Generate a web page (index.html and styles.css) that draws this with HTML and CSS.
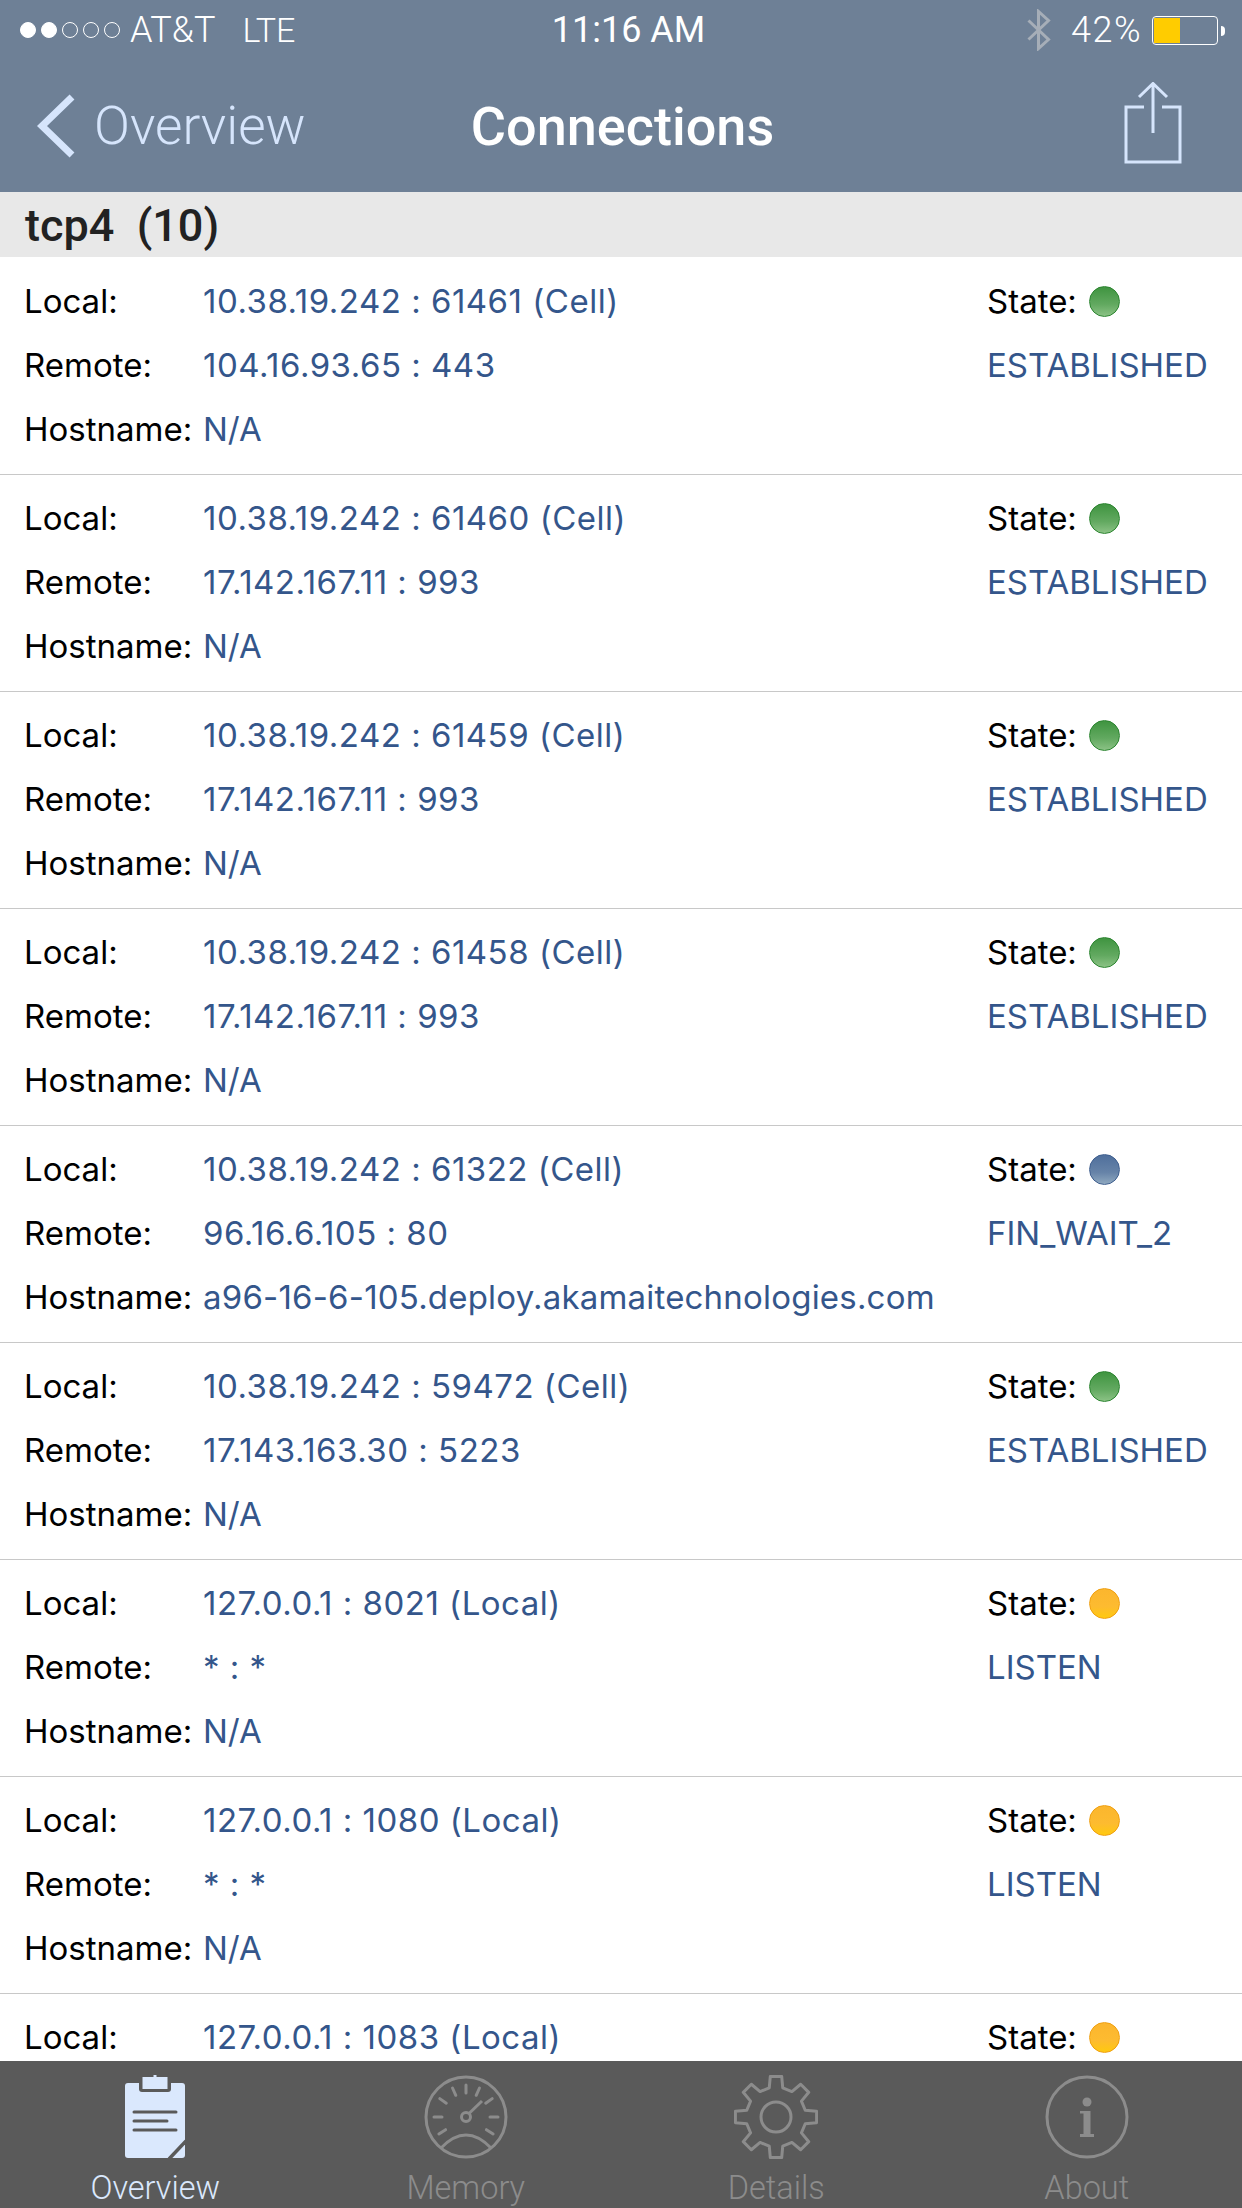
FILE: index.html
```html
<!DOCTYPE html>
<html>

<head>
    <meta charset="utf-8">
    <title>Connections</title>
    <link rel="stylesheet" href="styles.css">
</head>

<body>
    <div class="app">
        <header class="top">
            <div class="status">
                <div class="carrier">
                    <span class="signal"><i class="on"></i><i class="on"></i><i></i><i></i><i></i></span>
                    <span class="att">AT&amp;T</span>
                    <span class="lte">LTE</span>
                </div>
                <div class="time">11:16 AM</div>
                <div class="power">
                    <svg class="bt" width="24" height="42" viewBox="0 0 24 42">
                        <path d="M1.5 11.5 L21.5 30.5 L11.5 39.5 V2.5 L21.5 11.5 L1.5 30.5" fill="none" stroke="#a6aeb8" stroke-width="3" />
                    </svg>
                    <span class="pct">42%</span>
                    <span class="battery"><span class="level"></span></span>
                </div>
            </div>
            <div class="nav">
                <div class="back">
                    <svg width="40" height="64" viewBox="0 0 40 64">
                        <path d="M35 3 L5 32 L35 61" fill="none" stroke="#d6e5fc" stroke-width="7" />
                    </svg>
                    <span>Overview</span>
                </div>
                <div class="title">Connections</div>
                <div class="share">
                    <svg width="58" height="82" viewBox="0 0 58 82">
                        <path d="M20 25 H2 V80 H56 V25 H38 M29 51 V2 M15 15 L29 1.5 L43 15" fill="none" stroke="#d6e5fc" stroke-width="3" />
                    </svg>
                </div>
            </div>
        </header>

        <div class="section">tcp4&nbsp; (10)</div>

        <div class="list">
            <div class="conn">
                <span class="lbl">Local:</span><span class="val addr">10.38.19.242 : 61461 (Cell)</span><span class="lbl state">State: <i class="dot green"></i></span>
                <span class="lbl">Remote:</span><span class="val addr">104.16.93.65 : 443</span><span class="val">ESTABLISHED</span>
                <span class="lbl">Hostname:</span><span class="val">N/A</span>
            </div>
            <div class="conn">
                <span class="lbl">Local:</span><span class="val addr">10.38.19.242 : 61460 (Cell)</span><span class="lbl state">State: <i class="dot green"></i></span>
                <span class="lbl">Remote:</span><span class="val addr">17.142.167.11 : 993</span><span class="val">ESTABLISHED</span>
                <span class="lbl">Hostname:</span><span class="val">N/A</span>
            </div>
            <div class="conn">
                <span class="lbl">Local:</span><span class="val addr">10.38.19.242 : 61459 (Cell)</span><span class="lbl state">State: <i class="dot green"></i></span>
                <span class="lbl">Remote:</span><span class="val addr">17.142.167.11 : 993</span><span class="val">ESTABLISHED</span>
                <span class="lbl">Hostname:</span><span class="val">N/A</span>
            </div>
            <div class="conn">
                <span class="lbl">Local:</span><span class="val addr">10.38.19.242 : 61458 (Cell)</span><span class="lbl state">State: <i class="dot green"></i></span>
                <span class="lbl">Remote:</span><span class="val addr">17.142.167.11 : 993</span><span class="val">ESTABLISHED</span>
                <span class="lbl">Hostname:</span><span class="val">N/A</span>
            </div>
            <div class="conn">
                <span class="lbl">Local:</span><span class="val addr">10.38.19.242 : 61322 (Cell)</span><span class="lbl state">State: <i class="dot blue"></i></span>
                <span class="lbl">Remote:</span><span class="val addr">96.16.6.105 : 80</span><span class="val">FIN_WAIT_2</span>
                <span class="lbl">Hostname:</span><span class="val host">a96-16-6-105.deploy.akamaitechnologies.com</span>
            </div>
            <div class="conn">
                <span class="lbl">Local:</span><span class="val addr">10.38.19.242 : 59472 (Cell)</span><span class="lbl state">State: <i class="dot green"></i></span>
                <span class="lbl">Remote:</span><span class="val addr">17.143.163.30 : 5223</span><span class="val">ESTABLISHED</span>
                <span class="lbl">Hostname:</span><span class="val">N/A</span>
            </div>
            <div class="conn">
                <span class="lbl">Local:</span><span class="val addr">127.0.0.1 : 8021 (Local)</span><span class="lbl state">State: <i class="dot amber"></i></span>
                <span class="lbl">Remote:</span><span class="val addr">* : *</span><span class="val">LISTEN</span>
                <span class="lbl">Hostname:</span><span class="val">N/A</span>
            </div>
            <div class="conn">
                <span class="lbl">Local:</span><span class="val addr">127.0.0.1 : 1080 (Local)</span><span class="lbl state">State: <i class="dot amber"></i></span>
                <span class="lbl">Remote:</span><span class="val addr">* : *</span><span class="val">LISTEN</span>
                <span class="lbl">Hostname:</span><span class="val">N/A</span>
            </div>
            <div class="conn">
                <span class="lbl">Local:</span><span class="val addr">127.0.0.1 : 1083 (Local)</span><span class="lbl state">State: <i class="dot amber"></i></span>
            </div>
        </div>

        <nav class="tabs">
            <div class="tab active">
                <svg width="60" height="84" viewBox="0 0 60 84">
                    <rect x="0" y="8" width="60" height="75" rx="3" fill="#dae8fd" />
                    <rect x="14" y="5" width="32" height="12" rx="3" fill="#5a5a5a" />
                    <rect x="17.5" y="2" width="25" height="12" fill="#dae8fd" />
                    <rect x="28.5" y="0" width="3" height="3" fill="#dae8fd" />
                    <path d="M9 37 H51 M9 46 H42 M9 55 H51" stroke="#5a5a5a" stroke-width="3" stroke-linecap="round" />
                    <path d="M44 84 L61 66" stroke="#5a5a5a" stroke-width="3.5" />
                </svg>
                <span>Overview</span>
            </div>
            <div class="tab">
                <svg width="84" height="84" viewBox="0 0 84 84">
                    <g fill="none" stroke="#8c8c8c" stroke-width="3">
                        <circle cx="42" cy="42" r="40" />
                        <circle cx="42" cy="42" r="4.5" />
                        <path d="M45 38.5 L58 26" />
                        <path d="M17 73 Q42 47 67 73" />
                        <path d="M42 10 V18 M55.5 13 L52.2 20.3 M28.5 13 L31.8 20.3 M68.2 23.6 L61.7 28.2 M15.8 23.6 L22.3 28.2 M74 42 H66 M10 42 H18 M69.1 59 L62.4 54.7 M14.9 59 L21.6 54.7" stroke-linecap="round" />
                    </g>
                </svg>
                <span>Memory</span>
            </div>
            <div class="tab">
                <svg width="84" height="84" viewBox="0 0 84 84">
                    <g fill="none" stroke="#8c8c8c" stroke-width="3" stroke-linejoin="round">
                        <path d="M35.25 12.77 L36.3 1.4 H47.7 L48.75 12.77 L57.9 16.56 L66.68 9.25 L74.75 17.32 L67.44 26.1 L71.23 35.25 L82.6 36.3 V47.7 L71.23 48.75 L67.44 57.9 L74.75 66.68 L66.68 74.75 L57.9 67.44 L48.75 71.23 L47.7 82.6 H36.3 L35.25 71.23 L26.1 67.44 L17.32 74.75 L9.25 66.68 L16.56 57.9 L12.77 48.75 L1.4 47.7 V36.3 L12.77 35.25 L16.56 26.1 L9.25 17.32 L17.32 9.25 L26.1 16.56 Z" />
                        <circle cx="42" cy="42" r="15" />
                    </g>
                </svg>
                <span>Details</span>
            </div>
            <div class="tab">
                <svg width="84" height="84" viewBox="0 0 84 84">
                    <circle cx="42" cy="42" r="40" fill="none" stroke="#8c8c8c" stroke-width="3" />
                    <circle cx="42" cy="27" r="4.5" fill="#8c8c8c" />
                    <rect x="38.5" y="36" width="7" height="25" fill="#8c8c8c" />
                    <rect x="35" y="36" width="6" height="2.5" fill="#8c8c8c" />
                    <rect x="35" y="59" width="14" height="3" fill="#8c8c8c" />
                </svg>
                <span>About</span>
            </div>
        </nav>
    </div>
</body>

</html>
```

FILE: styles.css
```css
* {
    margin: 0;
    padding: 0;
    box-sizing: border-box;
}

html,
body {
    width: 1242px;
    height: 2208px;
    overflow: hidden;
    background: #fff;
}

body {
    font-family: Inter, "Noto Sans", sans-serif;
}

.app {
    width: 100%;
    height: 100%;
    display: flex;
    flex-direction: column;
}

/* top bar */
.top {
    height: 192px;
    background: #6e8096;
    color: #fff;
    flex: none;
}

.status {
    height: 60px;
    padding: 0 17px 0 20px;
    display: grid;
    grid-template-columns: 1fr auto 1fr;
    align-items: center;
    font-family: Roboto, sans-serif;
    font-size: 36px;
    font-weight: 300;
}

.carrier {
    display: flex;
    align-items: center;
}

.signal {
    display: flex;
    gap: 5px;
    margin-right: 10px;
}

.signal i {
    width: 16px;
    height: 16px;
    border: 1px solid #fff;
    border-radius: 50%;
}

.signal .on {
    background: #fff;
}

.lte {
    margin-left: 27px;
    font-size: 34px;
}

.time {
    margin-left: 12px;
    font-weight: 400;
}

.power {
    display: flex;
    align-items: center;
    justify-content: flex-end;
}

.bt {
    margin-right: 20px;
}

.pct {
    letter-spacing: 1.5px;
}

.battery {
    width: 66px;
    height: 29px;
    margin-left: 10px;
    margin-right: 7px;
    border: 1px solid #fff;
    border-radius: 4px;
    padding: 1px;
    position: relative;
}

.battery:after {
    content: "";
    position: absolute;
    left: 68px;
    top: 9px;
    width: 4px;
    height: 10px;
    background: #fff;
    border-radius: 0 4px 4px 0;
}

.level {
    display: block;
    width: 26px;
    height: 100%;
    background: #ffcc00;
}

.nav {
    height: 132px;
    padding: 0 60px 0 37px;
    display: grid;
    grid-template-columns: 1fr auto 1fr;
    align-items: center;
}

.back {
    display: flex;
    align-items: center;
    gap: 17px;
    color: #d6e5fc;
    font-family: Roboto, sans-serif;
    font-size: 53px;
    font-weight: 300;
}

.title {
    margin-left: 26px;
    font-family: Roboto, sans-serif;
    font-size: 54px;
    font-weight: 500;
}

.share {
    display: flex;
    justify-content: flex-end;
    padding-bottom: 6px;
}

/* list */
.section {
    height: 65px;
    flex: none;
    padding-left: 25px;
    background: #e8e8e8;
    color: #222;
    font-family: Roboto, sans-serif;
    font-size: 45px;
    font-weight: 500;
    line-height: 68px;
}

.list {
    flex: 1;
    overflow: hidden;
    padding-top: 1px;
}

.conn {
    height: 217px;
    padding: 11px 0 0 24px;
    display: grid;
    grid-template-columns: 179px 784px 1fr;
    grid-auto-rows: 64px;
    align-items: center;
    border-bottom: 1px solid #c8c8c8;
    font-size: 33px;
    line-height: 64px;
}

.lbl {
    color: #000;
}

.val {
    color: #34568b;
    white-space: nowrap;
}

.addr {
    letter-spacing: 0.5px;
}

.host {
    letter-spacing: 0.2px;
}

.state {
    display: flex;
    align-items: center;
    gap: 12px;
}

.dot {
    width: 31px;
    height: 31px;
    border-radius: 50%;
    border: 1.5px solid;
}

.green {
    border-color: #2c8530;
    background: linear-gradient(#3f9440, #62a960 60%, #8bc285);
}

.blue {
    border-color: #3f5f8f;
    background: linear-gradient(#4f6f9c, #6683a8 60%, #8fa8bf);
}

.amber {
    border-color: #f0a010;
    background: linear-gradient(#fbb62e, #fdbb30 60%, #ffc90f);
}

/* tab bar */
.tabs {
    height: 147px;
    flex: none;
    background: #5a5a5a;
    display: grid;
    grid-template-columns: repeat(4, 1fr);
}

.tab {
    padding-top: 14px;
    display: flex;
    flex-direction: column;
    align-items: center;
    color: #8c8c8c;
    font-family: Roboto, sans-serif;
    font-size: 32.5px;
    font-weight: 300;
    line-height: 34px;
}

.tab svg {
    margin-bottom: 12px;
}

.active {
    color: #dae8fd;
}
```
